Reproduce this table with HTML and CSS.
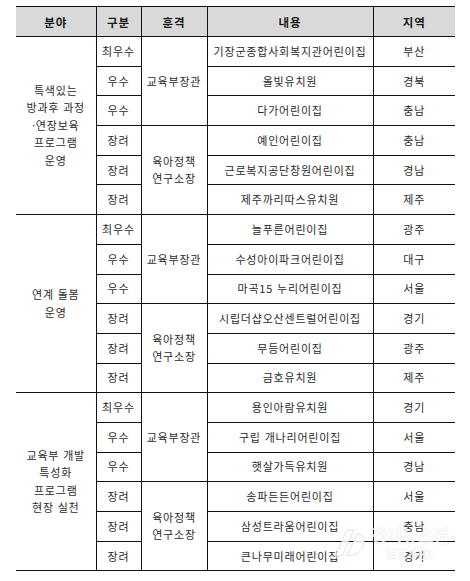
FILE: index.html
```html
<!DOCTYPE html>
<html lang="ko">
<head>
<meta charset="utf-8">
<title>수상 기관</title>
<link rel="stylesheet" href="styles.css">
</head>
<body>
<div class="wrap">
<table class="awards">
  <colgroup>
    <col class="c-field"><col class="c-grade"><col class="c-honor"><col class="c-name"><col class="c-region">
  </colgroup>
  <thead>
    <tr><th>분야</th><th>구분</th><th>훈격</th><th>내용</th><th>지역</th></tr>
  </thead>
  <tbody>
    <tr>
      <td rowspan="6" class="field">특색있는<br>방과후 과정<br>·연장보육<br>프로그램<br>운영</td>
      <td>최우수</td><td rowspan="3">교육부장관</td><td>기장군종합사회복지관어린이집</td><td>부산</td></tr>
    <tr><td>우수</td><td>올빛유치원</td><td>경북</td></tr>
    <tr><td>우수</td><td>다가어린이집</td><td>충남</td></tr>
    <tr><td>장려</td><td rowspan="3" class="honor">육아정책<br>연구소장</td><td>예인어린이집</td><td>충남</td></tr>
    <tr><td>장려</td><td>근로복지공단창원어린이집</td><td>경남</td></tr>
    <tr><td>장려</td><td>제주까리따스유치원</td><td>제주</td></tr>

    <tr>
      <td rowspan="6" class="field">연계 돌봄<br>운영</td>
      <td>최우수</td><td rowspan="3">교육부장관</td><td>늘푸른어린이집</td><td>광주</td></tr>
    <tr><td>우수</td><td>수성아이파크어린이집</td><td>대구</td></tr>
    <tr><td>우수</td><td>마곡15 누리어린이집</td><td>서울</td></tr>
    <tr><td>장려</td><td rowspan="3" class="honor">육아정책<br>연구소장</td><td>시립더샵오산센트럴어린이집</td><td>경기</td></tr>
    <tr><td>장려</td><td>무등어린이집</td><td>광주</td></tr>
    <tr><td>장려</td><td>금호유치원</td><td>제주</td></tr>

    <tr>
      <td rowspan="6" class="field">교육부 개발<br>특성화<br>프로그램<br>현장 실천</td>
      <td>최우수</td><td rowspan="3">교육부장관</td><td>용인아람유치원</td><td>경기</td></tr>
    <tr><td>우수</td><td>구립 개나리어린이집</td><td>서울</td></tr>
    <tr><td>우수</td><td>햇살가득유치원</td><td>경남</td></tr>
    <tr><td>장려</td><td rowspan="3" class="honor">육아정책<br>연구소장</td><td>송파든든어린이집</td><td>서울</td></tr>
    <tr><td>장려</td><td>삼성트라움어린이집</td><td>충남</td></tr>
    <tr><td>장려</td><td>큰나무미래어린이집</td><td>경기</td></tr>
  </tbody>
</table>
<div class="watermark">
  <svg class="wm-logo" width="36" height="32" viewBox="0 0 36 32">
    <path d="M2 30 L14 4 L21 4 L9 30 Z" fill="#ffffff" stroke="#d0d0d0" stroke-width="0.8"/>
    <path d="M14 30 L24 8 Q33 9 31 18 Q28 29 14 30 Z" fill="#ffffff" stroke="#d0d0d0" stroke-width="0.8"/>
  </svg>
  <div class="wm-text">
    <span class="wm-main">경기뉴스원</span>
    <span class="wm-sub">경경기신1</span>
  </div>
</div>
</div>
</body>
</html>
```

FILE: styles.css
```css
html, body {
  margin: 0;
  padding: 0;
  background: #ffffff;
}

.wrap {
  position: relative;
  width: 470px;
  height: 581px;
  padding: 6px 0 0 16px;
  box-sizing: border-box;
  overflow: hidden;
}

.awards {
  border-collapse: collapse;
  table-layout: fixed;
  width: 439px;
  font-family: "Noto Sans CJK KR", "Noto Sans", sans-serif;
  font-size: 11px;
  letter-spacing: 0.8px;
  color: #2a2a2a;
}

.c-field { width: 80px; }
.c-grade { width: 45px; }
.c-honor { width: 66px; }
.c-name { width: 166px; }
.c-region { width: 82px; }

.awards th {
  height: 29px;
  padding: 0;
  background: #d9d9d9;
  font-weight: 700;
  font-size: 11.5px;
  color: #1a1a1a;
  border-top: 1px solid #111;
  border-bottom: 1px solid #111;
  border-left: 1px solid #111;
  text-align: center;
  vertical-align: middle;
}

.awards th:first-child { border-left: none; }

.awards td {
  height: 28.7px;
  padding: 0;
  text-align: center;
  vertical-align: middle;
  line-height: 17px;
  border: 1px solid #111;
  white-space: nowrap;
}

.awards tr td:last-child { border-right: none; }
.awards td.field { border-left: none; line-height: 17.5px; }
.awards td.honor { line-height: 17px; }

.watermark {
  position: absolute;
  left: 333px;
  top: 526px;
  display: flex;
  align-items: flex-start;
  gap: 2px;
  opacity: 0.8;
  pointer-events: none;
}

.wm-text {
  display: flex;
  flex-direction: column;
  align-items: center;
  line-height: 1;
}

.wm-main {
  font-family: "Noto Sans CJK KR", sans-serif;
  font-weight: 700;
  font-size: 17px;
  color: #ffffff;
  text-shadow: 0 0 1px #bdbdbd;
}

.wm-sub {
  font-family: "Noto Sans CJK KR", sans-serif;
  font-weight: 700;
  font-size: 11px;
  color: #ffffff;
  text-shadow: 0 0 1px #bdbdbd;
  margin-top: 6px;
}
```
